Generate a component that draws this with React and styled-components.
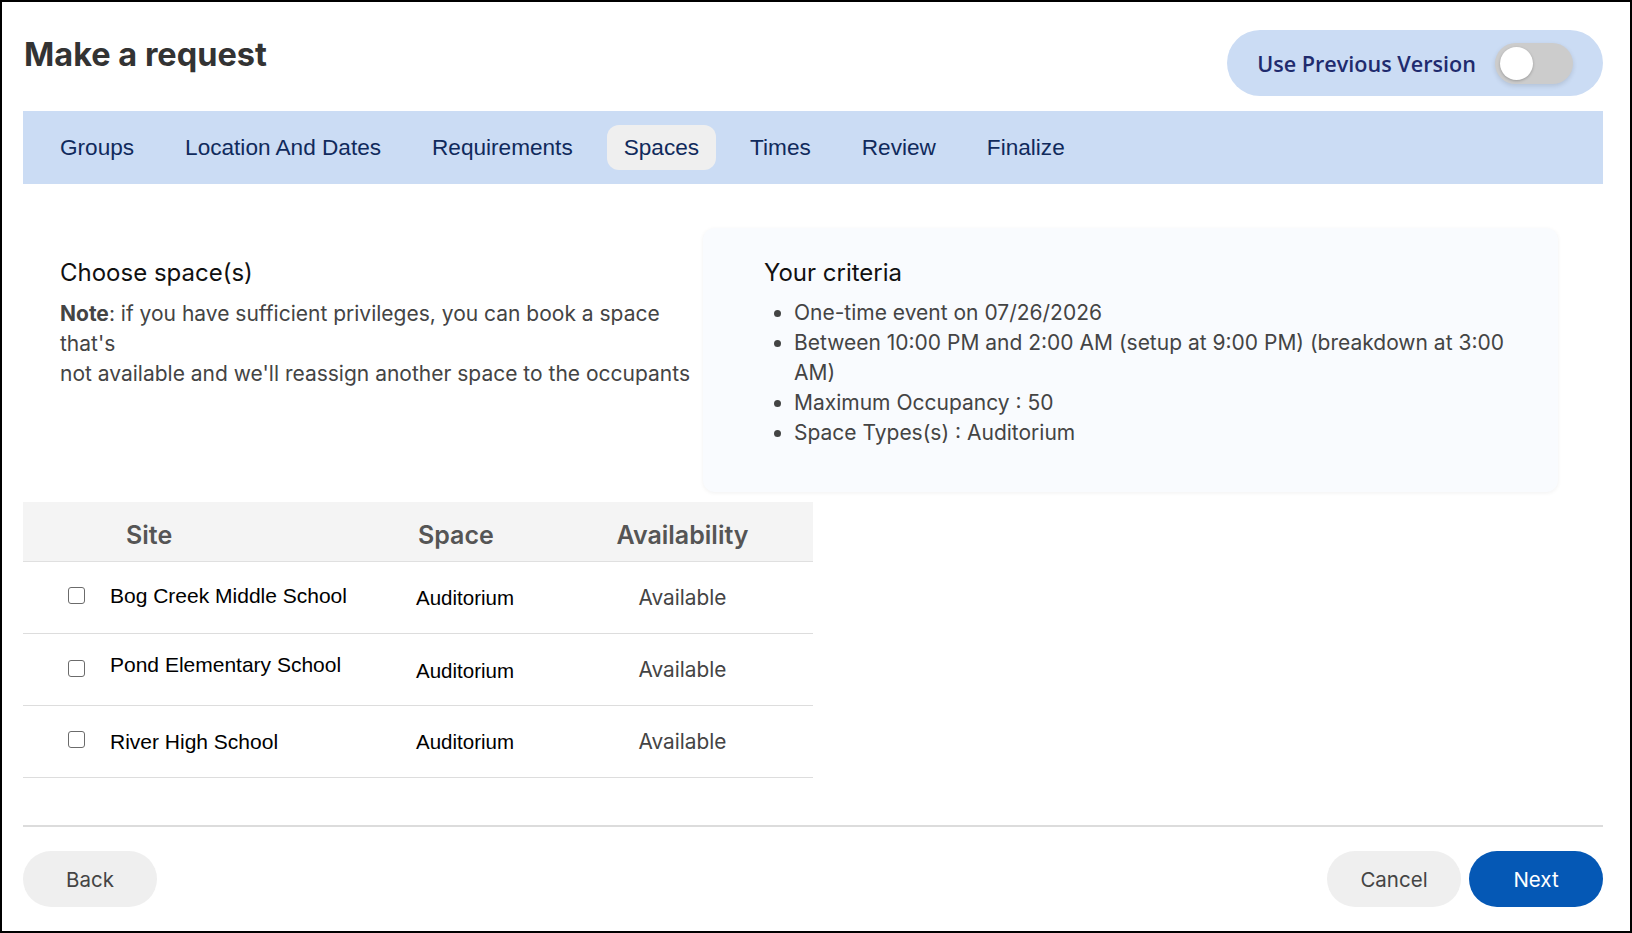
import React from "react";
import styled, { createGlobalStyle } from "styled-components";

const GlobalStyle = createGlobalStyle`
  html, body {
    margin: 0;
    padding: 0;
    background: #fff;
  }
  body {
    font-family: "Inter", "Liberation Sans", sans-serif;
  }
  * {
    box-sizing: border-box;
  }
`;

const Page = styled.div`
  height: 100vh;
  border: 2px solid #000;
  display: flex;
  flex-direction: column;
  padding: 0 27px 0 21px;
  background: #fff;
`;

const Header = styled.header`
  display: flex;
  justify-content: space-between;
  align-items: flex-start;
  padding-top: 28px;
`;

const Title = styled.h1`
  margin: 5px 0 0 1px;
  font-family: "Inter", sans-serif;
  font-weight: 700;
  font-size: 32.5px;
  line-height: normal;
  color: #333;
`;

const TogglePill = styled.div`
  display: flex;
  align-items: center;
  gap: 19px;
  height: 66px;
  padding: 0 30px;
  border-radius: 33px;
  background: #cbdcf4;
`;

const ToggleLabel = styled.span`
  font-family: "Open Sans", sans-serif;
  font-weight: 600;
  font-size: 21.6px;
  color: #1f2b6e;
`;

const SwitchTrack = styled.div`
  position: relative;
  width: 78px;
  height: 41px;
  border-radius: 21px;
  background: #cccccc;
  box-shadow: 0 2px 5px rgba(0, 0, 0, 0.12);
`;

const SwitchKnob = styled.span`
  position: absolute;
  top: 4px;
  left: 5px;
  width: 33px;
  height: 33px;
  border-radius: 50%;
  background: #fff;
  box-shadow: 0 1px 3px rgba(0, 0, 0, 0.25);
`;

const TabBar = styled.nav`
  margin-top: 15px;
  height: 73px;
  background: #cbdcf4;
  display: flex;
  align-items: center;
  gap: 17px;
  padding: 0 20px;
`;

const Tab = styled.div`
  display: flex;
  align-items: center;
  height: 45px;
  padding: 0 17px;
  border-radius: 12px;
  font-family: "Liberation Sans", Arial, sans-serif;
  font-size: 22.6px;
  color: #102a5c;
  background: ${(p) => (p.$active ? "#efefef" : "transparent")};
`;

const Content = styled.section`
  display: grid;
  grid-template-columns: 680px 855px;
  margin-top: 44px;
`;

const LeftCol = styled.div`
  padding: 30px 0 0 37px;
`;

const SectionTitle = styled.h2`
  margin: 0;
  font-family: "Inter", sans-serif;
  font-weight: 400;
  font-size: 24px;
  line-height: normal;
  color: #111;
`;

const Note = styled.p`
  margin: 12px 0 0;
  font-size: 21px;
  line-height: 30px;
  color: #444;

  strong {
    font-weight: 700;
  }
`;

const CriteriaBox = styled.div`
  background: #f9fbfe;
  border-radius: 12px;
  box-shadow: 0 1px 4px rgba(0, 0, 0, 0.06);
  padding: 30px 30px 44px 61px;
`;

const CriteriaList = styled.ul`
  margin: 11px 0 0;
  padding-left: 30px;
  font-size: 21px;
  line-height: 30px;
  color: #444;
`;

const Table = styled.div`
  margin-top: 10px;
  width: 790px;
`;

const GridRow = styled.div`
  display: grid;
  grid-template-columns: 87px 306px 136px 1fr;
  align-items: center;
`;

const HeaderRow = styled(GridRow)`
  height: 60px;
  background: #f4f4f4;
  border-bottom: 1px solid #e0e0e0;
`;

const BodyRow = styled(GridRow)`
  height: 72px;
  border-bottom: 1px solid #dddddd;
`;

const HeadCell = styled.div`
  font-family: "Inter", sans-serif;
  font-weight: 600;
  font-size: 25px;
  color: #555;
  margin-top: 6px;
  padding-left: ${(p) => p.$indent || 0}px;
  text-align: ${(p) => p.$align || "left"};
`;

const CheckCell = styled.div`
  padding-left: 45px;
  display: flex;
  align-items: center;
  margin-top: ${(p) => p.$shift || 0}px;
`;

const CheckBox = styled.span`
  width: 17px;
  height: 17px;
  border: 1.5px solid #6b6b6b;
  border-radius: 3px;
  background: #fff;
`;

const TextCell = styled.div`
  font-family: "Liberation Sans", Arial, sans-serif;
  font-size: ${(p) => p.$size || 20.5}px;
  color: #000;
  margin-top: ${(p) => p.$shift || 0}px;
`;

const AvailCell = styled.div`
  font-family: "Inter", sans-serif;
  font-size: 20.8px;
  color: #444;
  text-align: center;
`;

const Footer = styled.footer`
  margin-top: auto;
  border-top: 2px solid #dcdcdc;
  padding: 24px 0 24px;
  display: flex;
  justify-content: space-between;
`;

const ButtonGroup = styled.div`
  display: flex;
  gap: 8px;
`;

const Button = styled.button`
  width: 134px;
  height: 56px;
  border: none;
  border-radius: 28px;
  font-family: "Inter", sans-serif;
  font-size: 20.5px;
  cursor: pointer;
  background: ${(p) => (p.$primary ? "#0558b5" : "#efefef")};
  color: ${(p) => (p.$primary ? "#fff" : "#444")};
`;

const tabs = [
  "Groups",
  "Location And Dates",
  "Requirements",
  "Spaces",
  "Times",
  "Review",
  "Finalize",
];

const rows = [
  { site: "Bog Creek Middle School", shift: -4, spaceShift: 0, boxShift: -4 },
  { site: "Pond Elementary School", shift: -10, spaceShift: 3, boxShift: -3 },
  { site: "River High School", shift: 0, spaceShift: 0, boxShift: -4 },
];

const criteria = [
  "One-time event on 07/26/2026",
  "Between 10:00 PM and 2:00 AM (setup at 9:00 PM) (breakdown at 3:00 AM)",
  "Maximum Occupancy : 50",
  "Space Types(s) : Auditorium",
];

export default function App() {
  return (
    <>
      <GlobalStyle />
      <Page>
        <Header>
          <Title>Make a request</Title>
          <TogglePill>
            <ToggleLabel>Use Previous Version</ToggleLabel>
            <SwitchTrack role="switch" aria-checked="false">
              <SwitchKnob />
            </SwitchTrack>
          </TogglePill>
        </Header>

        <TabBar>
          {tabs.map((t) => (
            <Tab key={t} $active={t === "Spaces"}>
              {t}
            </Tab>
          ))}
        </TabBar>

        <Content>
          <LeftCol>
            <SectionTitle>Choose space(s)</SectionTitle>
            <Note>
              <strong>Note</strong>: if you have sufficient privileges, you can
              book a space that's
              <br />
              not available and we'll reassign another space to the occupants
            </Note>
          </LeftCol>
          <CriteriaBox>
            <SectionTitle>Your criteria</SectionTitle>
            <CriteriaList>
              {criteria.map((c) => (
                <li key={c}>{c}</li>
              ))}
            </CriteriaList>
          </CriteriaBox>
        </Content>

        <Table>
          <HeaderRow>
            <span />
            <HeadCell $indent={16}>Site</HeadCell>
            <HeadCell $indent={2}>Space</HeadCell>
            <HeadCell $align="center">Availability</HeadCell>
          </HeaderRow>
          {rows.map((r) => (
            <BodyRow key={r.site}>
              <CheckCell $shift={r.boxShift}>
                <CheckBox />
              </CheckCell>
              <TextCell $shift={r.shift} $size={21}>
                {r.site}
              </TextCell>
              <TextCell $shift={r.spaceShift}>Auditorium</TextCell>
              <AvailCell>Available</AvailCell>
            </BodyRow>
          ))}
        </Table>

        <Footer>
          <Button>Back</Button>
          <ButtonGroup>
            <Button>Cancel</Button>
            <Button $primary>Next</Button>
          </ButtonGroup>
        </Footer>
      </Page>
    </>
  );
}
